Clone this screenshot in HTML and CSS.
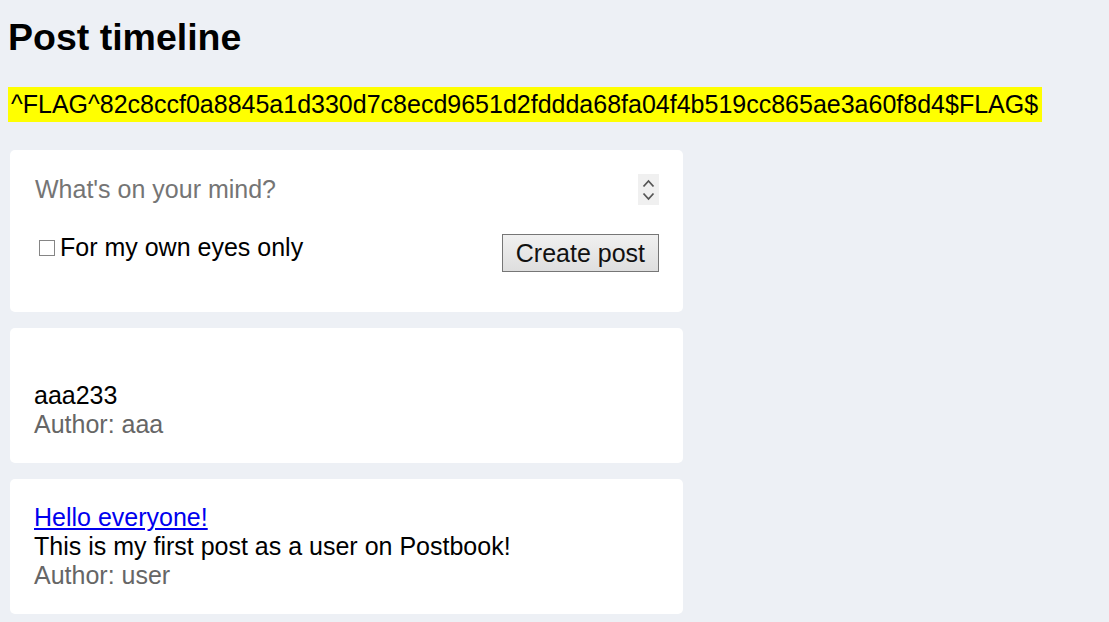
FILE: index.html
```html
<!DOCTYPE html>
<html lang="en">
<head>
<meta charset="utf-8">
<title>Post timeline</title>
<link rel="stylesheet" href="styles.css">
</head>
<body>
  <h1 class="page-title">Post timeline</h1>
  <div class="flag-row"><span class="flag">^FLAG^82c8ccf0a8845a1d330d7c8ecd9651d2fddda68fa04f4b519cc865ae3a60f8d4$FLAG$</span></div>

  <div class="timeline">
    <form class="card composer">
      <div class="compose-box">
        <textarea class="compose-input" placeholder="What's on your mind?" rows="1"></textarea>
        <div class="fake-scroll" aria-hidden="true">
          <svg width="15" height="11" viewBox="0 0 15 11"><path d="M2.5 8.5 L7.5 3 L12.5 8.5" fill="none" stroke="#555" stroke-width="1.8"/></svg>
          <svg width="15" height="11" viewBox="0 0 15 11"><path d="M2.5 2.5 L7.5 8 L12.5 2.5" fill="none" stroke="#555" stroke-width="1.8"/></svg>
        </div>
      </div>
      <div class="compose-actions">
        <label class="private-label"><input type="checkbox" class="private-check">For my own eyes only</label>
        <button type="button" class="create-btn">Create post</button>
      </div>
    </form>

    <div class="card post">
      <div class="post-title"><a href="#"></a></div>
      <div class="post-body">aaa233</div>
      <div class="post-author">Author: aaa</div>
    </div>

    <div class="card post">
      <div class="post-title"><a href="#">Hello everyone!</a></div>
      <div class="post-body">This is my first post as a user on Postbook!</div>
      <div class="post-author">Author: user</div>
    </div>
  </div>
</body>
</html>
```

FILE: styles.css
```css
html, body {
  background: #edf0f5;
}
body {
  margin: 8px;
  font-family: "Liberation Sans", Arial, sans-serif;
  font-size: 25px;
  line-height: 29px;
  color: #000;
}
.page-title {
  margin: 8px 0 0;
  font-size: 37.5px;
  line-height: 43px;
  font-weight: bold;
}
.flag-row {
  margin-top: 28px;
}
.flag {
  display: inline-block;
  background: #ffff00;
  padding: 3px 4px 3px 3px;
  line-height: 29px;
}
.timeline {
  margin-top: 28px;
  margin-left: 2px;
  width: 673px;
  display: flex;
  flex-direction: column;
  gap: 16px;
}
.card {
  background: #fff;
  border-radius: 5px;
  padding: 24px;
}
.composer {
  padding-bottom: 40px;
  margin: 0;
}
.compose-box {
  display: flex;
  align-items: flex-start;
  height: 32px;
}
.compose-input {
  flex: 1;
  border: none;
  outline: none;
  resize: none;
  overflow: hidden;
  padding: 1px 1px;
  margin: 0;
  height: 32px;
  font-family: inherit;
  font-size: 25px;
  line-height: 29px;
  background: transparent;
  color: #000;
}
.compose-input::placeholder {
  color: #757575;
}
.fake-scroll {
  width: 21px;
  height: 31px;
  background: #f0f0f0;
  display: flex;
  flex-direction: column;
  align-items: center;
  justify-content: center;
  gap: 2px;
}
.fake-scroll svg {
  display: block;
}
.compose-actions {
  margin-top: 28px;
  display: flex;
  justify-content: space-between;
  align-items: flex-start;
}
.private-label {
  display: flex;
  align-items: center;
  margin-top: -1px;
  padding-left: 5px;
  gap: 5px;
  line-height: 29px;
}
.private-check {
  appearance: none;
  -webkit-appearance: none;
  width: 16px;
  height: 16px;
  margin: 1px 0 0;
  border: 1px solid #858585;
  background: #fff;
  border-radius: 0;
}
.create-btn {
  font-family: inherit;
  font-size: 25px;
  line-height: 29px;
  height: 38px;
  padding: 3px 13px;
  border: 1px solid #767676;
  border-radius: 0;
  background: linear-gradient(#f0f0f0, #dedede);
  color: #111;
}
.post-title {
  height: 29px;
}
.post-title a {
  color: #0000ee;
  text-decoration: underline;
}
.post-author {
  color: #666;
}
```
